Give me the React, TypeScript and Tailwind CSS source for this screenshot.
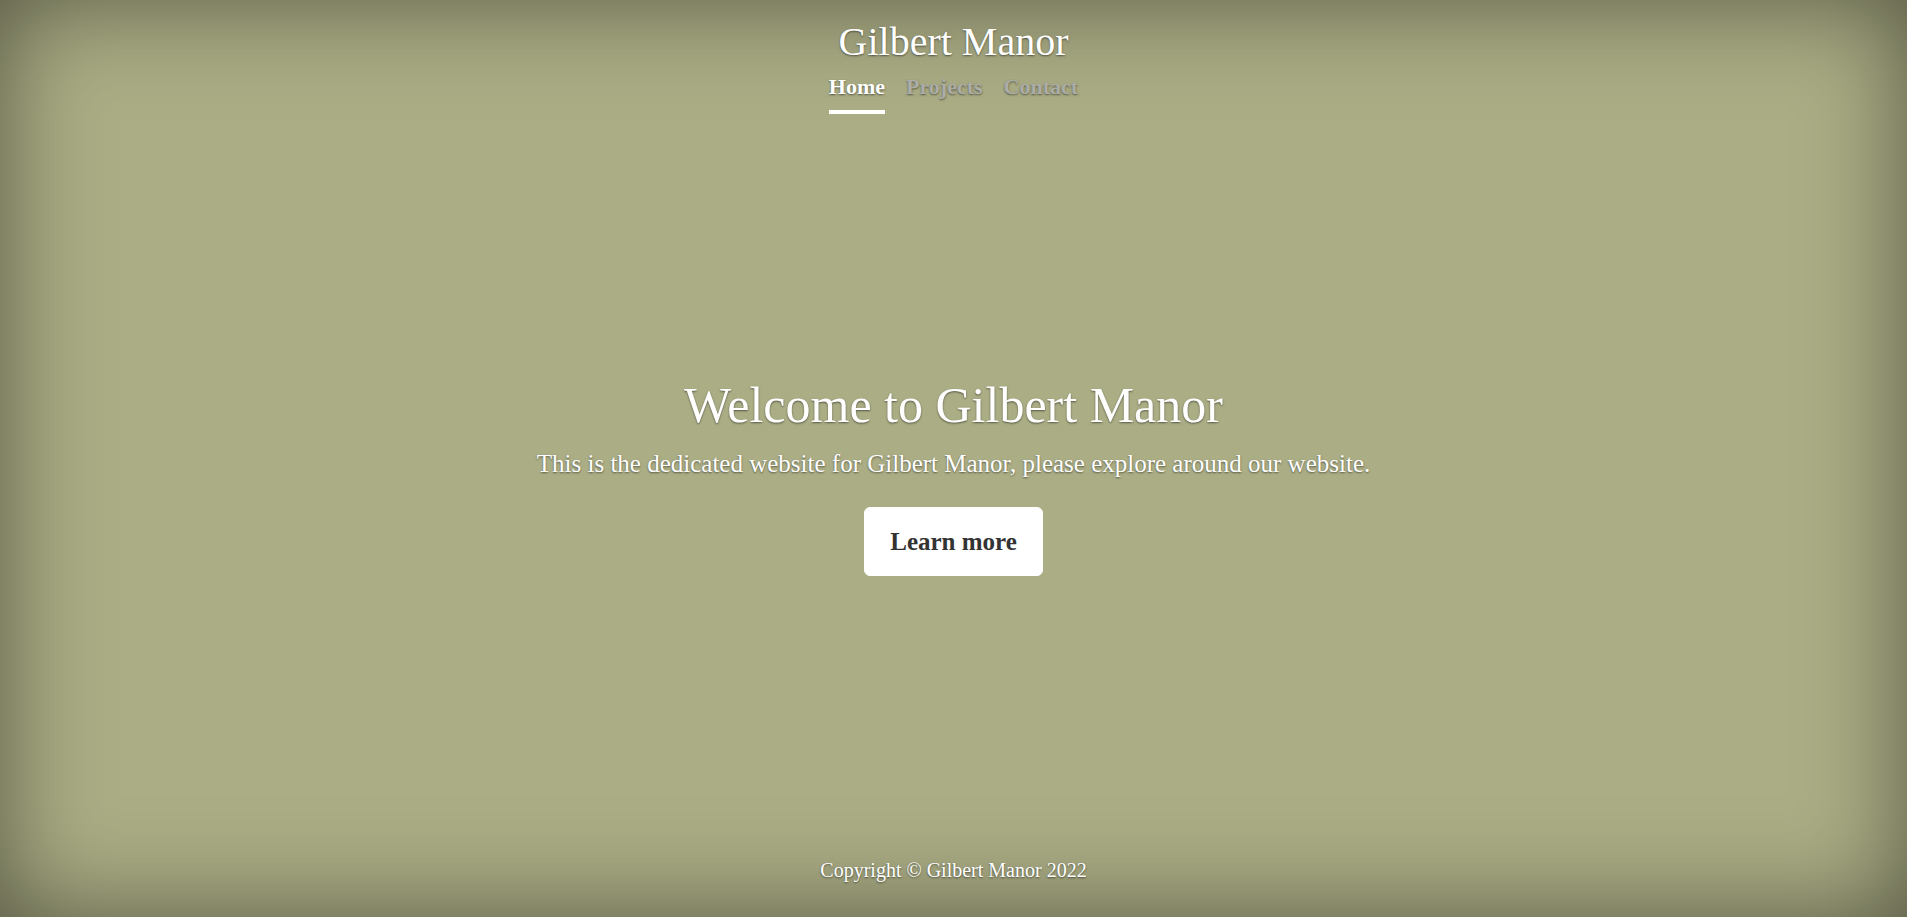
export default function App() {
  const shadow = '[text-shadow:0_1px_2px_rgba(0,0,0,0.5)]';

  return (
    <div
      className={`flex h-screen flex-col items-center bg-[#abad85] text-center text-white shadow-[inset_0_0_100px_rgba(0,0,0,0.5)] ${shadow}`}
      style={{ fontFamily: '"Liberation Serif", "Times New Roman", serif' }}
    >
      {/* Masthead */}
      <header className="flex flex-col items-center pt-[18px]">
        <h3 className="text-[40px] leading-[48px] font-normal">Gilbert Manor</h3>
        <nav className="flex gap-[21px] text-[22px] leading-[33px] font-bold">
          <a href="#" className="border-b-4 border-white pt-[4px] pb-[7px] text-white">
            Home
          </a>
          <a href="#" className="border-b-4 border-transparent pt-[4px] pb-[7px] text-[#adada7]">
            Projects
          </a>
          <a href="#" className="border-b-4 border-transparent pt-[4px] pb-[7px] text-[#adada7]">
            Contact
          </a>
        </nav>
      </header>

      {/* Hero */}
      <main className="mt-[261px] flex flex-col items-center px-5">
        <h1 className="mb-[10px] text-[50px] leading-[60px] font-normal">Welcome to Gilbert Manor</h1>
        <p className="text-[25px] leading-[37.5px]">
          This is the dedicated website for Gilbert Manor, please explore around our website.
        </p>
        <a
          href="#"
          className="mt-[24px] rounded-[6px] border border-white bg-white px-[25px] py-[15px] text-[25px] leading-[37.5px] font-bold text-[#333] [text-shadow:none]"
        >
          Learn more
        </a>
      </main>

      <footer className="mt-auto pb-[32px] text-[20px] leading-[30px]">
        <p>Copyright © Gilbert Manor 2022</p>
      </footer>
    </div>
  );
}
